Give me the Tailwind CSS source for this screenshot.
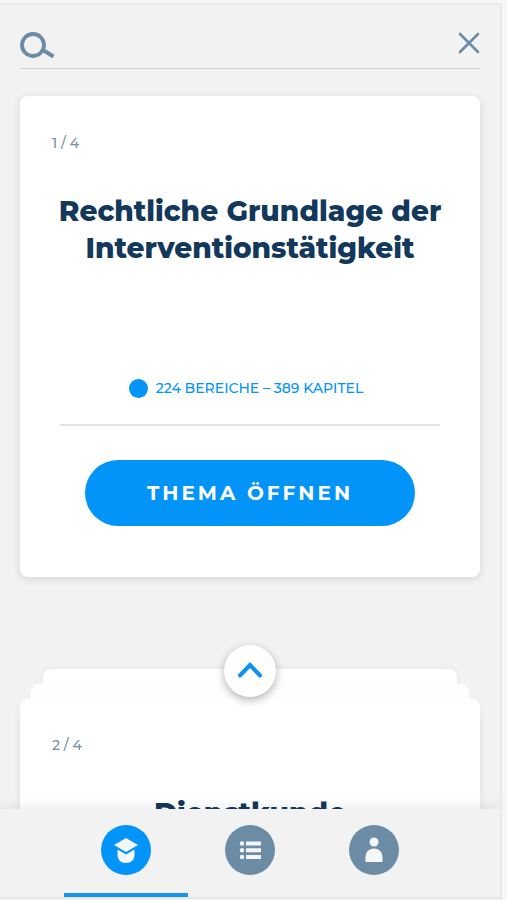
<!DOCTYPE html>
<html lang="de">
<head>
<meta charset="utf-8">
<meta name="viewport" content="width=device-width, initial-scale=1">
<title>Themen</title>
<script src="https://cdn.jsdelivr.net/npm/@tailwindcss/browser@4"></script>
</head>
<body class="bg-[#f6f6f6] font-['Montserrat',Inter,sans-serif]">
<div class="h-screen pt-[3px] pr-[5px] pb-px">
  <div class="flex h-full flex-col overflow-hidden border-t-2 border-r-2 border-b-2 border-[#e8e8e8] bg-[#f2f2f2]">
    <form role="search" class="mx-5 flex h-16 shrink-0 items-center gap-3 border-b border-[#cbd4d9] pt-5">
      <label for="search" aria-label="Suche" class="pb-1">
        <svg class="h-8 w-9" viewBox="0 0 36 32" fill="none" stroke="#6c8ca6" aria-hidden="true">
          <circle cx="13" cy="16" r="11" stroke-width="3.8"/>
          <path d="M22 20.5 33.5 27.5" stroke-width="4"/>
        </svg>
      </label>
      <input id="search" type="text" class="h-10 min-w-0 flex-1 bg-transparent text-base text-[#12385c] outline-none">
      <button type="reset" aria-label="Schließen" class="pb-2">
        <svg class="h-[22px] w-[22px]" viewBox="0 0 22 22" fill="none" stroke="#6c8ca6" stroke-width="2.6" stroke-linecap="round" aria-hidden="true"><path d="m2 2 18 18M20 2 2 20"/></svg>
      </button>
    </form>

    <main class="min-h-0 flex-1 overflow-hidden px-5 pt-[27px]">
      <article class="rounded-lg bg-white px-8 pt-[37px] pb-[51px] shadow-[0_2px_8px_rgba(0,0,0,0.12)]">
        <p class="text-sm leading-5 font-medium text-[#7890a5]">1 / 4</p>
        <h2 class="mt-10 min-h-44 text-center text-[28px] leading-[37px] font-extrabold text-[#12385c]">Rechtliche Grundlage der Interventionstätigkeit</h2>
        <div class="mx-2 border-b-2 border-[#e3e3e3] pt-[9px] pr-2 pb-[26px]">
          <p class="flex items-center justify-center gap-2 text-sm leading-5 font-medium text-[#0294f9]"><span class="size-[19px] rounded-full bg-[#0294f9]"></span>224 BEREICHE – 389 KAPITEL</p>
        </div>
        <button type="button" class="mx-auto mt-[34px] block h-[66px] w-5/6 rounded-full bg-[#0294f9] text-xl font-bold tracking-[3px] text-white">THEMA ÖFFNEN</button>
      </article>

      <section class="relative mt-[92px]">
        <div class="mx-[23px] h-[15px] rounded-t-lg bg-white shadow-[0_0_6px_rgba(0,0,0,0.06)]"></div>
        <div class="relative mx-[11px] h-[15px] rounded-t-lg bg-[#fefefe]"></div>
        <article class="relative rounded-t-lg bg-white px-8 pt-9 pb-10 shadow-[0_8px_8px_rgba(0,0,0,0.08)]">
          <p class="text-sm leading-5 font-medium text-[#7890a5]">2 / 4</p>
          <h2 class="mt-10 text-center text-[28px] leading-[37px] font-extrabold text-[#12385c]">Dienstkunde</h2>
        </article>
        <button type="button" aria-label="Nächstes Thema" class="absolute -top-6 left-1/2 flex size-[52px] -translate-x-1/2 items-center justify-center rounded-full bg-white shadow-[0_3px_8px_rgba(0,0,0,0.3)]">
          <svg class="h-5 w-7" viewBox="0 0 28 20" fill="none" stroke="#0b92f4" stroke-width="4" stroke-linecap="round" aria-hidden="true"><path d="M4 14.500 14 4l10 10.500"/></svg>
        </button>
      </section>
    </main>

    <nav class="relative grid h-[88px] shrink-0 grid-cols-3 bg-[#f2f2f2] px-16 shadow-[0_-2px_12px_rgba(0,0,0,0.08)]">
      <a href="#themen" aria-label="Themen" aria-current="page" class="flex justify-center border-b-4 border-[#1790ee] pt-4">
        <svg class="size-[50px]" viewBox="0 0 50 50" aria-hidden="true">
          <circle cx="25" cy="25" r="25" fill="#0294f9"/>
          <path d="M25 13 37 20 25 27 13 20Z" fill="#f4f6f8"/>
          <path d="M16.5 24.500 25 29.500 33.500 24.500v5c0 5.500-3.500 8.500-8.500 8.500s-8.500-3-8.500-8.500Z" fill="#f4f6f8"/>
        </svg>
      </a>
      <a href="#liste" aria-label="Liste" class="flex justify-center pt-4">
        <svg class="size-[50px]" viewBox="0 0 50 50" aria-hidden="true">
          <circle cx="25" cy="25" r="25" fill="#6c8ca6"/>
          <g fill="#f4f6f8"><circle cx="17" cy="18.500" r="2.200"/><circle cx="17" cy="25.200" r="2.200"/><circle cx="17" cy="32" r="2.200"/><path d="M21 16.500h15v4H21zM21 23.200h15v4H21zM21 30h15v4H21z"/></g>
        </svg>
      </a>
      <a href="#profil" aria-label="Profil" class="flex justify-center pt-4">
        <svg class="size-[50px]" viewBox="0 0 50 50" aria-hidden="true">
          <circle cx="25" cy="25" r="25" fill="#6c8ca6"/>
          <circle cx="25" cy="17" r="4.500" fill="#f4f6f8"/>
          <path d="M16.500 37v-4c0-6 3.200-9.500 8.500-9.500s8.500 3.500 8.500 9.500v4Z" fill="#f4f6f8"/>
        </svg>
      </a>
    </nav>
  </div>
</div>
</body>
</html>
